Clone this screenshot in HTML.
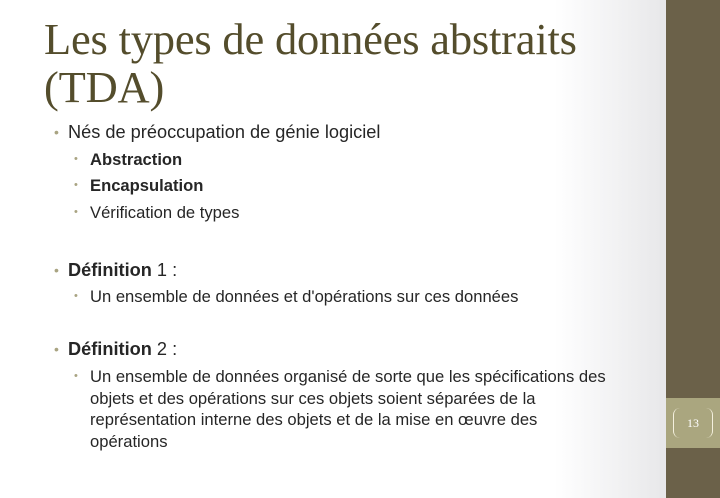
<!DOCTYPE html>
<html><head><meta charset="utf-8"><style>
body{margin:0;width:720px;height:498px;overflow:hidden;position:relative;background:linear-gradient(90deg,#fff 0%,#fff 77%,#e8e8ea 92%);font-family:"Liberation Sans",sans-serif;color:#262626}
.bar{position:absolute;left:666px;top:0;width:54px;height:498px;background:#6b6149}
.band{position:absolute;left:666px;top:398px;width:54px;height:50px;background:#aaa67f}
.num{position:absolute;left:673px;top:408px;width:38px;height:30px;border-left:1.5px solid #f4f0de;border-right:1.5px solid #f4f0de;border-radius:7px;color:#fff;font-family:"Liberation Serif",serif;font-size:12px;text-align:center;line-height:30px}
h1{position:absolute;left:44px;top:15px;margin:0;font-family:"Liberation Serif",serif;font-weight:normal;font-size:44.5px;line-height:48px;color:#544d2c;letter-spacing:-0.2px}
.t{position:absolute;white-space:nowrap}
.l1{font-size:18.2px;left:68px}
.l2{font-size:16.6px;left:90px}
.b1,.b2{position:absolute;color:#a9a482}
.b1{left:54px;font-size:14px}
.b2{left:74px;font-size:11px}
.p{line-height:21.7px}
</style></head><body>
<div class="bar"></div><div class="band"></div><div class="num">13</div>
<h1>Les types de données abstraits<br>(TDA)</h1>
<span class="b1" style="top:124px">•</span><span class="t l1" style="top:122px">Nés de préoccupation de génie logiciel</span>
<span class="b2" style="top:153px">•</span><span class="t l2" style="top:150px"><b>Abstraction</b></span>
<span class="b2" style="top:179px">•</span><span class="t l2" style="top:176px"><b>Encapsulation</b></span>
<span class="b2" style="top:206px">•</span><span class="t l2" style="top:203px">Vérification de types</span>
<span class="b1" style="top:262px">•</span><span class="t l1" style="top:260px"><b>Définition</b> 1 :</span>
<span class="b2" style="top:290px">•</span><span class="t l2" style="top:287px">Un ensemble de données et d'opérations sur ces données</span>
<span class="b1" style="top:341px">•</span><span class="t l1" style="top:339px"><b>Définition</b> 2 :</span>
<span class="b2" style="top:370px">•</span><span class="t l2 p" style="top:366px">Un ensemble de données organisé de sorte que les spécifications des<br>objets et des opérations sur ces objets soient séparées de la<br>représentation interne des objets et de la mise en œuvre des<br>opérations</span>
</body></html>
